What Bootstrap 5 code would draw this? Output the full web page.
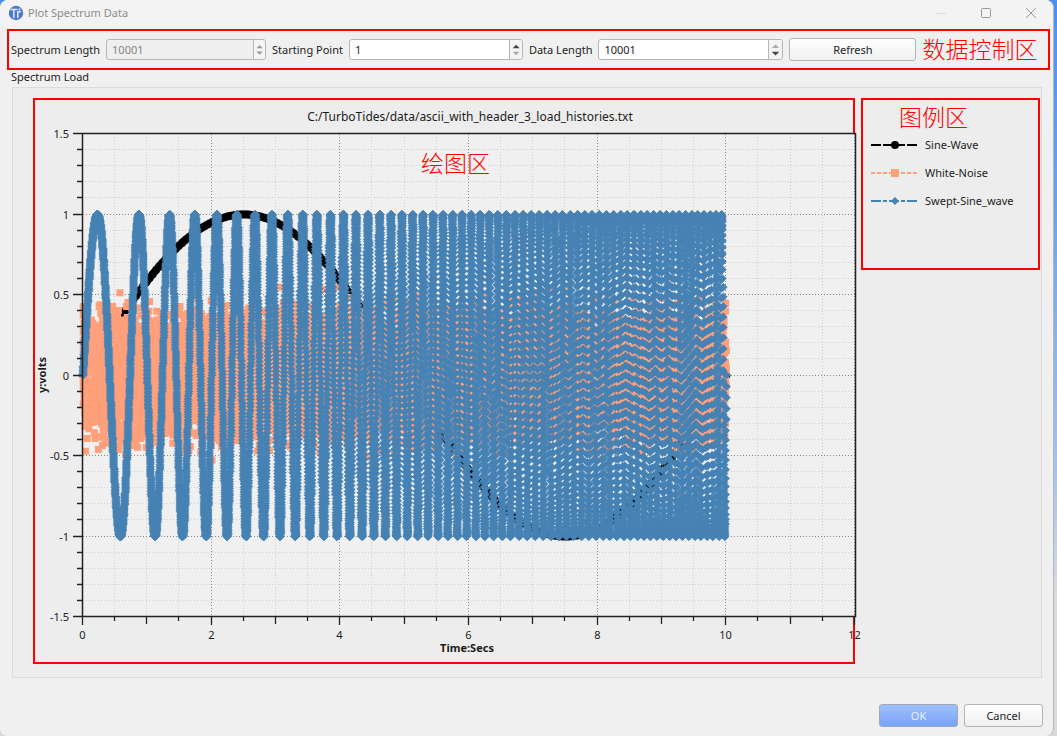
<!DOCTYPE html>
<html lang="zh-CN">
<head>
<meta charset="utf-8">
<meta name="viewport" content="width=device-width, initial-scale=1">
<title>Plot Spectrum Data</title>
<link href="https://cdn.jsdelivr.net/npm/bootstrap@5.3.0/dist/css/bootstrap.min.css" rel="stylesheet">
<style>
  body { font-family: "Noto Sans", "Noto Sans CJK SC", sans-serif; font-size: 11px; line-height: 16px; color: #1c1c1c;
         background: linear-gradient(#4a90f4, #6fa3e8 30%, #a9c4e8 65%, #dcdcdc 82%, #d9d9d9); }
  .dialog-window { min-height: 100vh; background: #f0f0f0; margin-right: 3px; border-right: 1px solid #b4b8be; border-radius: 8px; }
  .title-strip { height: 28px; background: #f3f3f3; color: #8c8c8c; font-size: 11px; border-radius: 8px 8px 0 0; padding: 0 14px 2px 8px; }
  .caption-btn { width: 16px; height: 16px; line-height: 0; }
  .caption-set { gap: 29px; }
  .zone { border: 2px solid #f00; }
  .zone-name { color: #f00; font-family: "Noto Sans CJK SC", sans-serif; font-weight: 300; font-size: 23px; line-height: 32px; }
  .control-zone { margin: 1px 3px 0 7px; height: 41px; padding: 0 0 0 2px; }
  .control-zone, .control-zone .field, .load-panel, .dialog-foot { gap: 6px; }
  .control-zone .zone-name { padding-bottom: 3px; }
  .spin { height: 21px; background: #fff; border: 1px solid #b6b6b6; border-radius: 3px; }
  .spin input { min-width: 0; border: 0; outline: 0; background: transparent; padding: 0 5px; color: #1c1c1c; }
  .spin input:disabled { color: #858585; }
  .spin.is-off { background: #efefef; }
  .spin svg { width: 14px; height: 19px; border-left: 1px solid #b6b6b6; background: #f4f4f4; border-radius: 0 3px 3px 0; }
  .spin-md { width: 174px; }
  .spin-sm { width: 160px; }
  .spin-lg { width: 185px; }
  .tool-btn { --bs-btn-font-size: 11px; --bs-btn-padding-y: 0; --bs-btn-padding-x: 0; --bs-btn-border-radius: 3px; --bs-btn-border-color: #b4b4b4; --bs-btn-color: #1c1c1c;
              line-height: 21px; background: linear-gradient(#fff, #f0f0f0); }
  .tool-btn.is-main { --bs-btn-color: #eaf2ff; --bs-btn-border-color: #a0a8b8; background: linear-gradient(#9fc0ff, #78a3f6); }
  .w-refresh { width: 127px; }
  .w-dialog { width: 79px; }
  .panel-title { line-height: 14px; padding-left: 11px; }
  .load-panel { margin: 3px 11px 0 12px; padding: 10px 1px 13px 20px; background: #ededed; border: 1px solid #dcdcdc; }
  .dialog-foot { padding: 0 10px 9px 0; }
  .legend-zone { width: 179px; height: 172px; padding-left: 8px; }
  .legend-zone li { height: 28px; }
  .legend-zone .zone-name { padding-left: 28px; height: 31px; }
  .plot text { fill: #1c1c1c; }
  .plot .plot-title { font-size: 12px; }
  .plot .zone-name { fill: #f00; }
</style>
</head>
<body>
<div class="dialog-window d-flex flex-column">
  <header class="title-strip d-flex align-items-center gap-1">
    <svg width="16" height="16" viewBox="0 0 16 16" aria-hidden="true"><circle cx="8" cy="8" r="7.2" fill="#4c78cf"/><path d="M2.500 4.500h7M5.800 4.500v8.500M9.800 6v7M9.800 6.700h3M11.500 3.500v2" stroke="#e4edff" stroke-width="1.500" fill="none"/></svg>
    <span class="flex-grow-1">Plot Spectrum Data</span>
    <span class="caption-set d-flex">
      <button class="btn p-0 border-0 caption-btn" aria-label="Minimize"><svg width="12" height="12"><path d="M1 6.500h10" stroke="#dedede"/></svg></button>
      <button class="btn p-0 border-0 caption-btn" aria-label="Maximize"><svg width="12" height="12"><rect x="1.500" y="1.500" width="9" height="9" rx="1" fill="none" stroke="#999"/></svg></button>
      <button class="btn p-0 border-0 caption-btn" aria-label="Close"><svg width="12" height="12"><path d="M1 1l10 10M11 1L1 11" stroke="#999"/></svg></button>
    </span>
  </header>

  <form class="zone control-zone d-flex align-items-center text-nowrap">
    <div class="field d-flex align-items-center"><label for="specLen">Spectrum Length</label>
      <div class="spin spin-sm is-off d-flex"><input class="flex-grow-1" id="specLen" value="10001" disabled><svg viewBox="0 0 14 19"><path d="M3 8l4-4 4 4zM3 12l4 4 4-4z" fill="#9a9a9a"/></svg></div></div>
    <div class="field d-flex align-items-center"><label for="startPt">Starting Point</label>
      <div class="spin spin-md d-flex"><input class="flex-grow-1" id="startPt" value="1"><svg viewBox="0 0 14 19"><path d="M3 8l4-4 4 4z" fill="#444"/><path d="M3 12l4 4 4-4z" fill="#aaa"/></svg></div></div>
    <div class="field d-flex align-items-center"><label for="dataLen">Data Length</label>
      <div class="spin spin-lg d-flex"><input class="flex-grow-1" id="dataLen" value="10001"><svg viewBox="0 0 14 19"><path d="M3 8l4-4 4 4z" fill="#aaa"/><path d="M3 12l4 4 4-4z" fill="#444"/></svg></div></div>
    <button type="button" class="btn tool-btn w-refresh">Refresh</button>
    <span class="zone-name">数据控制区</span>
  </form>

  <div class="panel-title">Spectrum Load</div>
  <main class="load-panel d-flex align-items-start">
    <div class="zone flex-grow-1">
      <svg class="plot d-block w-100 overflow-visible" viewBox="35 100 818 562" role="img" aria-label="Spectrum plot">
        <rect x="83" y="134" width="772" height="483" fill="#f0f0f0"/>
        <path id="gridMinor" stroke="#d0d0d0" stroke-dasharray="1 2"/>
        <path id="gridMajor" stroke="#888" stroke-dasharray="1 2"/>
        <path id="sine" fill="#000"/>
        <path id="noise" fill="#ffa07a"/>
        <path id="sweep" fill="#4682b4" stroke="#4682b4" stroke-width=".6" stroke-linejoin="round"/>
        <rect x="82.500" y="133.500" width="773" height="483" fill="none" stroke="#222" stroke-width="1.500"/>
        <path id="ticks" stroke="#222" stroke-width="1.300"/>
        <g id="yLabels" text-anchor="end"></g>
        <g id="xLabels" text-anchor="middle"></g>
        <text class="plot-title" x="470" y="121" text-anchor="middle">C:/TurboTides/data/ascii_with_header_3_load_histories.txt</text>
        <text x="467" y="652" text-anchor="middle" font-weight="bold">Time:Secs</text>
        <text transform="translate(46 375) rotate(-90)" text-anchor="middle" font-weight="bold">y:volts</text>
        <text class="zone-name" x="421" y="172">绘图区</text>
      </svg>
    </div>
    <aside class="zone legend-zone">
      <div class="zone-name">图例区</div>
      <ul class="list-unstyled m-0">
        <li class="d-flex align-items-center gap-2"><svg width="46" height="10"><path d="M0 5h46" stroke="#000" stroke-width="2" stroke-dasharray="10 2"/><circle cx="24" cy="5" r="4" /></svg>Sine-Wave</li>
        <li class="d-flex align-items-center gap-2"><svg width="46" height="10"><path d="M0 5h46" stroke="#ffa07a" stroke-width="2" stroke-dasharray="4 2"/><path d="M20 1h8v8h-8z" fill="#ffa07a"/></svg>White-Noise</li>
        <li class="d-flex align-items-center gap-2"><svg width="46" height="10"><path d="M0 5h46" stroke="#4682b4" stroke-width="2" stroke-dasharray="10 2 4 2"/><path d="M24 1l4 4-4 4-4-4z" fill="#4682b4"/></svg>Swept-Sine_wave</li>
      </ul>
    </aside>
  </main>

  <footer class="dialog-foot d-flex justify-content-end mt-auto">
    <button class="btn tool-btn is-main w-dialog">OK</button>
    <button class="btn tool-btn w-dialog">Cancel</button>
  </footer>
</div>
<script src="https://cdn.jsdelivr.net/npm/bootstrap@5.3.0/dist/js/bootstrap.bundle.min.js"></script>
<script>
  const X = t => 83 + t * 64.33, Y = v => 375.5 - v * 161;
  const set = (id, d) => document.getElementById(id).setAttribute('d', d);
  const label = (id, x, y, s) => {
    const e = document.createElementNS('http://www.w3.org/2000/svg', 'text');
    e.setAttribute('x', x); e.setAttribute('y', y); e.textContent = s;
    document.getElementById(id).append(e);
  };

  // Grid, ticks and axis labels
  let minor = '', major = '', ticks = '';
  for (let i = 0; i <= 24; i++) {
    const x = Math.round(X(i / 2)) - .5, main = i % 4 === 0;
    const line = `M${x} 134V617`;
    if (main) major += line; else minor += line;
    ticks += `M${x} 617v${main ? 8 : i % 2 ? 4 : 7}`;
    if (main) label('xLabels', x, 639, i / 2);
  }
  for (let i = -15; i <= 15; i++) {
    const y = Math.round(Y(i / 10)) - .5, main = i % 5 === 0;
    const line = `M83 ${y}H855`;
    if (main) major += line; else minor += line;
    ticks += `M82 ${y}h${main ? -9 : -5}`;
    if (main) label('yLabels', 69, y + 4, i / 10);
  }
  set('gridMinor', minor); set('gridMajor', major); set('ticks', ticks);

  const STEP = .8, snap = v => Math.round(v / STEP) * STEP;
  let seed = 12345;
  const rnd = () => (seed = (seed * 1664525 + 1013904223) % 4294967296) / 4294967296;
  const gauss = () => {
    const g = Math.sqrt(-2 * Math.log(rnd() + 1e-9)) * Math.cos(2 * Math.PI * rnd());
    return Math.abs(g) > 3 ? gauss() : g;
  };
  let sine = '', noise = '', sweep = '';
  for (let i = 0; i <= 10000; i++) {
    const t = i / 1000, x = snap(X(t)), n = gauss() * .09 + (rnd() - .5) * .64;
    if (i % 10 === 0) sine += `M${x.toFixed(1)} ${(Y(Math.sin(Math.PI * t / 5)) - 4).toFixed(1)}a4 4 0 1 1 -.01 0z`;
    noise += `M${(x - 3.5).toFixed(1)} ${(snap(Y(n)) - 3.5).toFixed(1)}h7v7h-7z`;
    sweep += `M${x.toFixed(1)} ${(snap(Y(Math.sin(2 * Math.PI * (t + t * t / 2)))) - 4).toFixed(1)}l4 4-4 4-4-4z`;
  }
  set('sine', sine); set('noise', noise); set('sweep', sweep);
</script>
</body>
</html>
